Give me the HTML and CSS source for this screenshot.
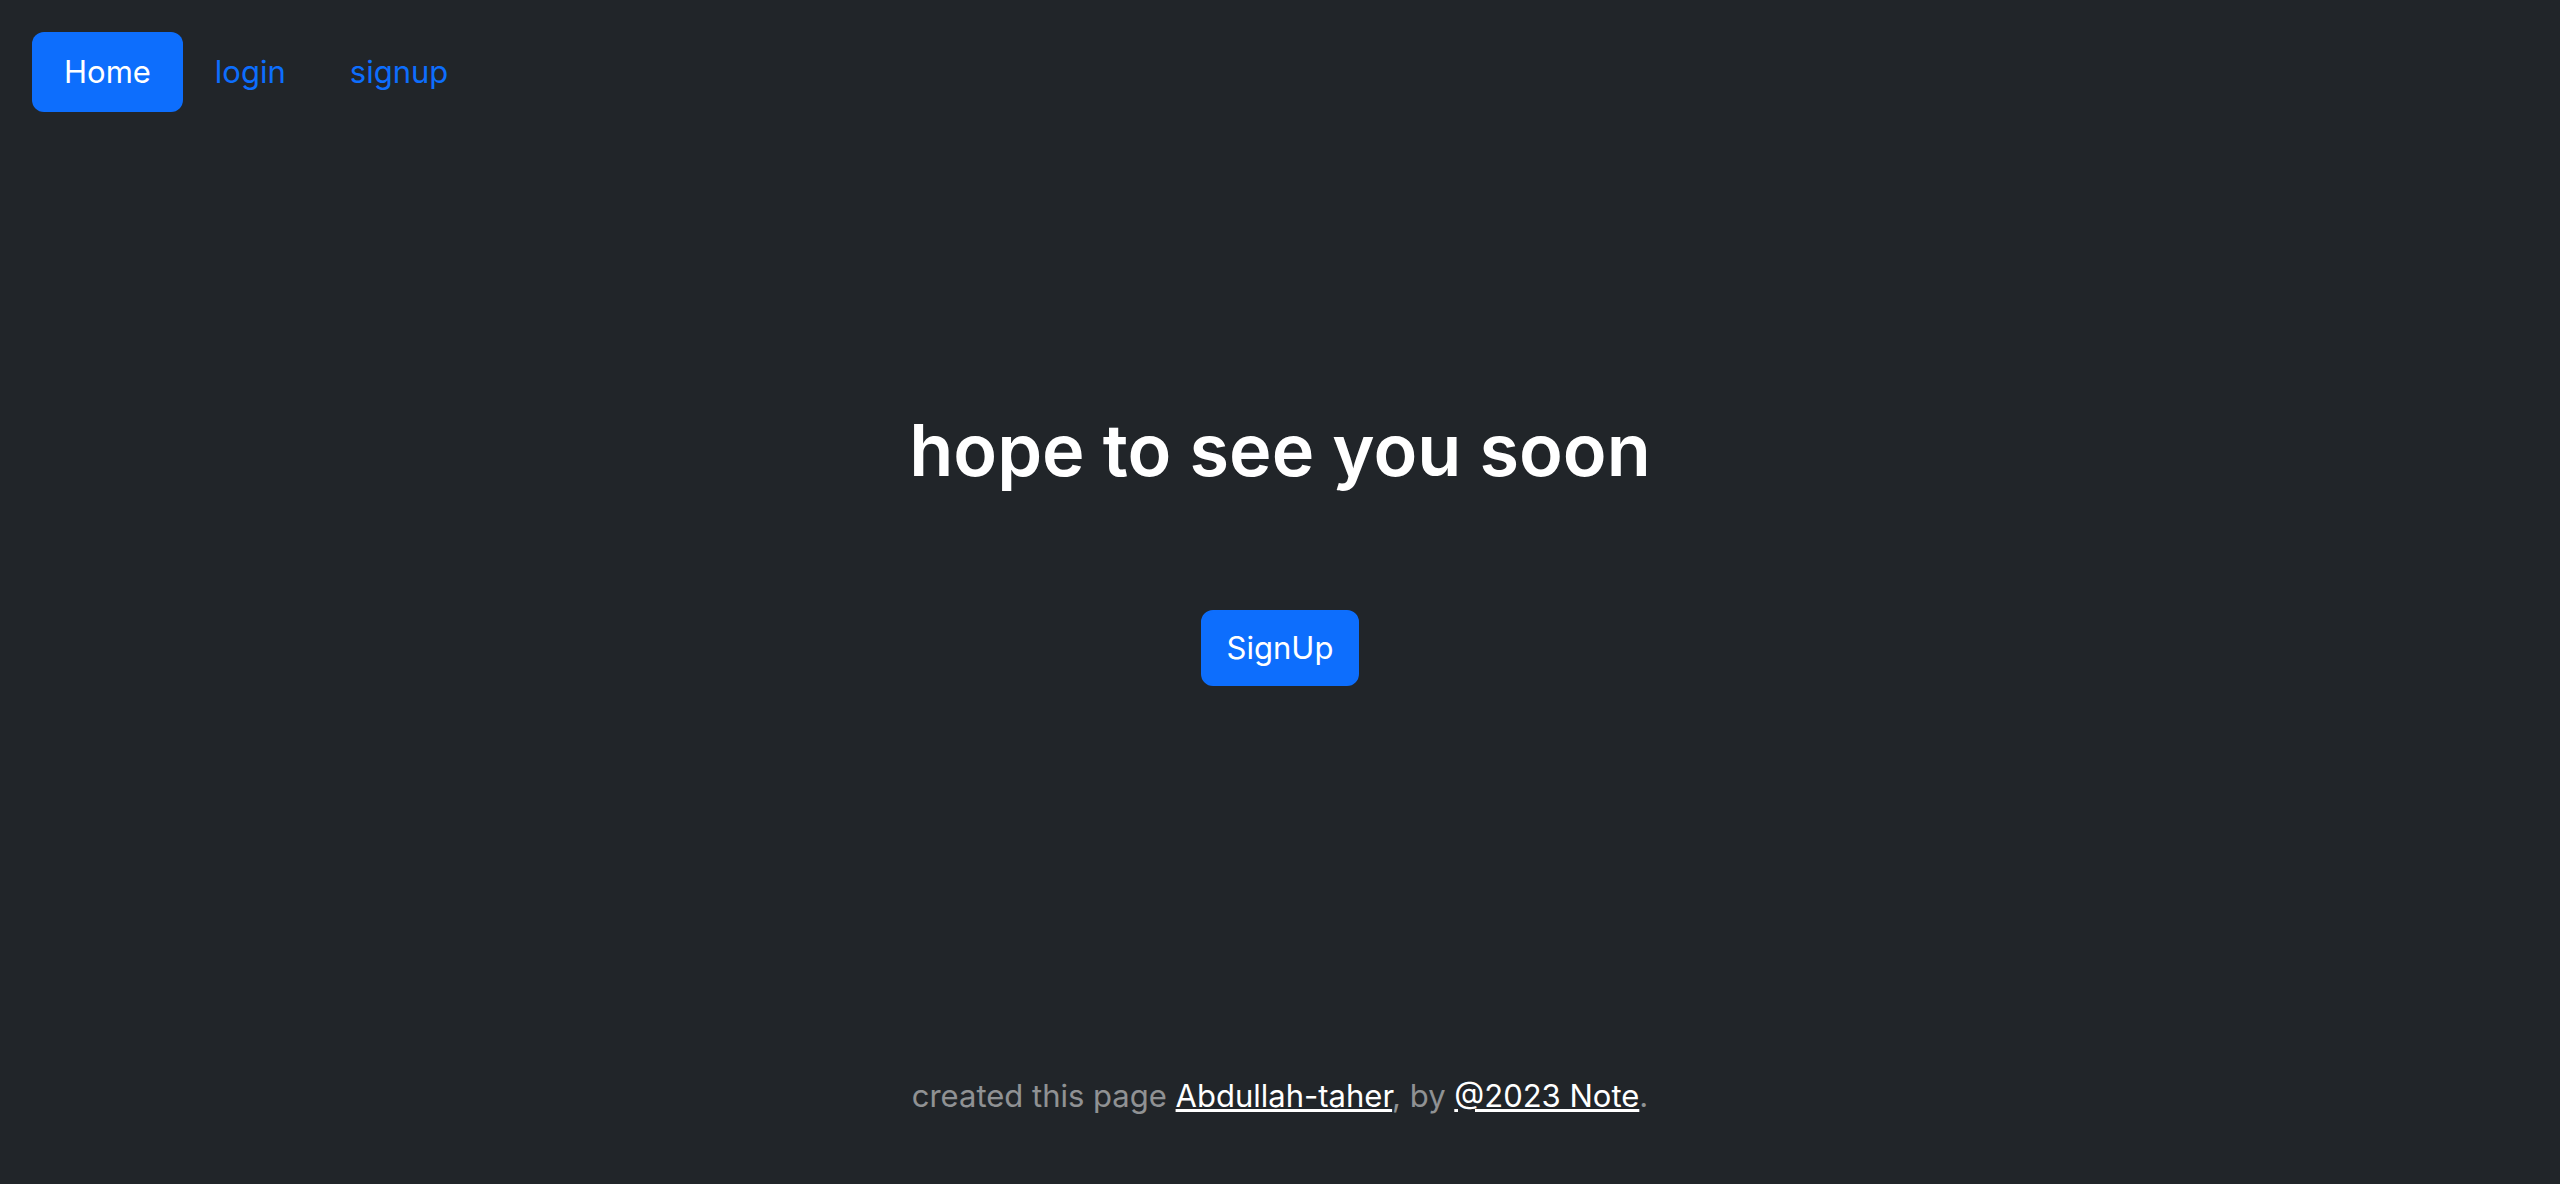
FILE: index.html
```html
<!DOCTYPE html>
<html lang="en">
<head>
<meta charset="utf-8">
<meta name="viewport" content="width=device-width, initial-scale=1">
<title>Note</title>
<link rel="stylesheet" href="styles.css">
</head>
<body>
<div class="page">
  <header class="header">
    <nav class="nav">
      <a class="nav-link active" href="#home" aria-current="page">Home</a>
      <a class="nav-link" href="#login">login</a>
      <a class="nav-link" href="#signup">signup</a>
    </nav>
  </header>
  <main class="main">
    <h1 class="title">hope to see you soon</h1>
    <button class="button" type="button">SignUp</button>
  </main>
  <footer class="footer">
    <p class="credit">created this page <a href="#author">Abdullah-taher</a>, by <a href="#note">@2023 Note</a>.</p>
  </footer>
</div>
</body>
</html>
```
FILE: styles.css
```css
* {
  box-sizing: border-box;
}

body {
  margin: 0;
  background: #212529;
  color: #fff;
  font-family: Inter, "Liberation Sans", sans-serif;
  font-size: 31px;
  line-height: 48px;
}

.page {
  display: flex;
  flex-direction: column;
  min-height: 100vh;
  padding: 32px;
}

.nav {
  display: flex;
}

.nav-link {
  padding: 16px 32px;
  border-radius: 12px;
  color: #0d6efd;
  text-decoration: none;
}

.nav-link.active {
  background: #0d6efd;
  color: #fff;
}

.main {
  display: flex;
  flex-direction: column;
  align-items: center;
  gap: 112px;
  margin: auto 0;
  padding-bottom: 96px;
}

.title {
  margin: 0;
  font-size: 72px;
  font-weight: 600;
  line-height: 96px;
}

.button {
  padding: 12px 24px;
  border: 2px solid #0d6efd;
  border-radius: 12px;
  background: #0d6efd;
  color: #fff;
  font: inherit;
}

.footer {
  text-align: center;
  color: rgba(255, 255, 255, 0.5);
}

.credit {
  margin: 0 0 32px;
}

.credit a {
  color: #fff;
  text-decoration-thickness: 3px;
}
```
